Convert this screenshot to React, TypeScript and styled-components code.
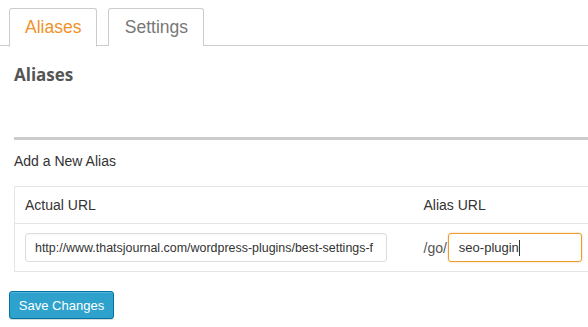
import React from "react";
import styled, { createGlobalStyle } from "styled-components";

const GlobalStyle = createGlobalStyle`
  html, body {
    margin: 0;
    padding: 0;
    background: #fff;
    overflow: hidden;
  }
  body {
    font-family: "Liberation Sans", Arial, sans-serif;
    color: #333;
  }
`;

const Page = styled.div`
  width: 588px;
  height: 327px;
  padding-top: 8px;
  box-sizing: border-box;
  overflow: hidden;
`;

const TabBar = styled.div`
  display: flex;
  gap: 11px;
  padding-left: 9px;
  border-bottom: 1px solid #ccc;
  height: 38px;
  box-sizing: border-box;
`;

const Tab = styled.div<{ $active?: boolean }>`
  box-sizing: border-box;
  height: ${(p) => (p.$active ? "39px" : "38px")};
  padding: 0 15px 1px;
  min-width: ${(p) => (p.$active ? "88px" : "96px")};
  display: flex;
  align-items: center;
  justify-content: center;
  border: 1px solid #ccc;
  border-bottom: ${(p) => (p.$active ? "1px solid #fff" : "none")};
  border-radius: 3px 3px 0 0;
  background: #fff;
  font-size: 17.5px;
  color: ${(p) => (p.$active ? "#f0922b" : "#777")};
`;

const Content = styled.div`
  padding-left: 14px;
`;

const Heading = styled.h2`
  margin: 17px 0 0;
  font-family: "Open Sans", sans-serif;
  font-weight: 700;
  font-size: 17px;
  line-height: 24px;
  color: #555;
`;

const Rule = styled.div`
  margin-top: 50px;
  height: 3px;
  background: #ccc;
`;

const SubHeading = styled.h3`
  margin: 11px 0 0;
  font-size: 14px;
  font-weight: 400;
  line-height: 20px;
  color: #333;
`;

const Table = styled.table`
  margin-top: 15px;
  width: 640px;
  border-collapse: collapse;
  background: #fff;
  border: 1px solid #e5e5e5;
`;

const HeadCell = styled.th<{ $w?: number }>`
  text-align: left;
  font-weight: 400;
  font-size: 14px;
  color: #333;
  height: 37px;
  padding: 0 10px;
  width: ${(p) => (p.$w ? `${p.$w}px` : "auto")};
  box-sizing: border-box;
  border-bottom: 1px solid #e5e5e5;
`;

const Cell = styled.td`
  height: 47px;
  padding: 0 10px;
  vertical-align: middle;
  font-size: 14px;
`;

const UrlField = styled.input`
  box-sizing: border-box;
  width: 362px;
  height: 29px;
  border: 1px solid #ddd;
  border-radius: 3px;
  box-shadow: inset 0 1px 2px rgba(0, 0, 0, 0.04);
  padding: 0 9px;
  font-family: "Liberation Sans", Arial, sans-serif;
  font-size: 12.45px;
  color: #333;
  background: #fff;
  outline: none;
`;

const AliasWrap = styled.div`
  display: flex;
  align-items: center;
`;

const Prefix = styled.span`
  font-size: 14px;
  color: #555;
  margin-right: 1px;
`;

const Caret = styled.span`
  display: inline-block;
  width: 1px;
  height: 16px;
  background: #333;
`;

const FocusField = styled.div`
  box-sizing: border-box;
  height: 29px;
  width: 134px;
  border: 1px solid #f19a2c;
  border-radius: 3px;
  box-shadow: 0 0 2px rgba(240, 150, 40, 0.5);
  padding: 0 0 0 10px;
  display: flex;
  align-items: center;
  font-size: 13px;
  color: #333;
`;

const SaveButton = styled.button`
  margin: 19px 0 0 9px;
  box-sizing: border-box;
  width: 105px;
  height: 28px;
  background: #2ea2cc;
  border: 1px solid #0074a2;
  border-radius: 3px;
  box-shadow: inset 0 1px 0 rgba(120, 200, 230, 0.5), 0 1px 0 rgba(0, 0, 0, 0.15);
  color: #fff;
  font-family: "Liberation Sans", Arial, sans-serif;
  font-size: 13px;
  padding: 0;
  cursor: pointer;
`;

export default function App() {
  return (
    <Page>
      <GlobalStyle />
      <TabBar>
        <Tab $active>Aliases</Tab>
        <Tab>Settings</Tab>
      </TabBar>
      <Content>
        <Heading>Aliases</Heading>
        <Rule />
        <SubHeading>Add a New Alias</SubHeading>
        <Table>
          <thead>
            <tr>
              <HeadCell $w={399}>Actual URL</HeadCell>
              <HeadCell>Alias URL</HeadCell>
            </tr>
          </thead>
          <tbody>
            <tr>
              <Cell>
                <UrlField defaultValue="http://www.thatsjournal.com/wordpress-plugins/best-settings-f" />
              </Cell>
              <Cell>
                <AliasWrap>
                  <Prefix>/go/</Prefix>
                  <FocusField>
                    seo-plugin
                    <Caret />
                  </FocusField>
                </AliasWrap>
              </Cell>
            </tr>
          </tbody>
        </Table>
      </Content>
      <SaveButton>Save Changes</SaveButton>
    </Page>
  );
}
